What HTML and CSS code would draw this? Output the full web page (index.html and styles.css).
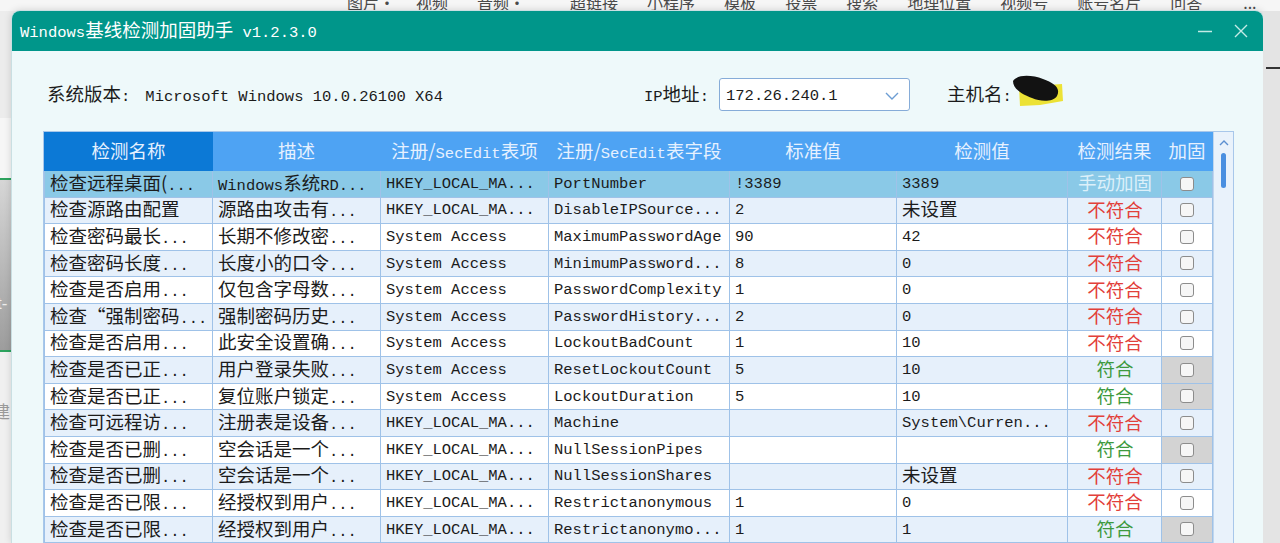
FILE: index.html
```html
<!DOCTYPE html>
<html lang="zh-CN">
<head>
  <meta charset="UTF-8" />
  <title>Windows基线检测加固助手 v1.2.3.0</title>
  <meta name="viewport" content="width=device-width, initial-scale=1" />
  <link rel="stylesheet" href="styles.css">
</head>
<body>
  <!-- editor toolbar behind the window, mostly hidden -->
  <div class="toolbar">
    <span class="drop">图片<b>·</b></span><span>视频</span><span class="drop">音频<b>·</b></span><span class="gap">超链接</span><span>小程序</span><span>模板</span><span>投票</span><span>搜索</span><span>地理位置</span><span>视频号</span><span>账号名片</span><span>问答</span><span class="more">...</span>
  </div>

  <div class="stage">
    <aside class="page-left">
      <div class="pl-top"></div>
      <div class="pl-light"></div>
      <div class="pl-banner"><span>t-</span></div>
      <div class="pl-rest"><span>建</span></div>
    </aside>

    <div class="window">
      <div class="titlebar">
        <div class="title">Windows<span class="zh">基线检测加固助手</span> v1.2.3.0</div>
        <div class="win-ctrl">
          <svg width="14" height="14" viewBox="0 0 14 14"><path d="M0 7.5 H14" stroke="#c4ebe6" stroke-width="1.6"/></svg>
          <svg width="14" height="14" viewBox="0 0 14 14"><path d="M1 1 L13 13 M13 1 L1 13" stroke="#c4ebe6" stroke-width="1.4"/></svg>
        </div>
      </div>

      <div class="content">
        <div class="info-row">
          <div class="sys"><span class="zh">系统版本</span>:<span class="val">Microsoft Windows 10.0.26100 X64</span></div>
          <div class="ip-label">IP<span class="zh">地址</span>:</div>
          <div class="ip-select">
            <span>172.26.240.1</span>
            <svg width="14" height="8" viewBox="0 0 14 8"><path d="M1 1 L7 7 L13 1" fill="none" stroke="#6c9dd3" stroke-width="1.4"/></svg>
          </div>
          <div class="host-label"><span class="zh">主机名</span>:</div>
          <svg class="scribble" width="54" height="34" viewBox="0 0 54 34">
            <path d="M9 13 L52 10 L53 27 L30 31 L10 32 Z" fill="#ece235"/>
            <path d="M3 7 C8 0 22 1 33 5 C44 9 51 14 47 22 C43 28 31 28 22 24 C14 21 3 16 3 7 Z" fill="#121212"/>
          </svg>
        </div>

        <div class="grid">
          <table>
            <colgroup>
              <col style="width:168px"><col style="width:168px"><col style="width:168px"><col style="width:181px">
              <col style="width:167px"><col style="width:171px"><col style="width:94px"><col style="width:51px">
            </colgroup>
            <thead>
              <tr>
                <th class="first"><span class="zh">检测名称</span></th>
                <th><span class="zh">描述</span></th>
                <th><span class="zh">注册/</span>SecEdit<span class="zh">表项</span></th>
                <th><span class="zh">注册/</span>SecEdit<span class="zh">表字段</span></th>
                <th><span class="zh">标准值</span></th>
                <th><span class="zh">检测值</span></th>
                <th><span class="zh">检测结果</span></th>
                <th><span class="zh">加固</span></th>
              </tr>
            </thead>
            <tbody>
              <tr class="selected">
                <td><span class="zh">检查远程桌面(</span>...</td>
                <td>Windows<span class="zh">系统</span>RD...</td>
                <td>HKEY_LOCAL_MA...</td>
                <td>PortNumber</td>
                <td>!3389</td>
                <td>3389</td>
                <td class="res manual">手动加固</td>
                <td class="chk"><span class="cb"></span></td>
              </tr>
              <tr>
                <td><span class="zh">检查源路由配置</span></td>
                <td><span class="zh">源路由攻击有</span>...</td>
                <td>HKEY_LOCAL_MA...</td>
                <td>DisableIPSource...</td>
                <td>2</td>
                <td><span class="zh">未设置</span></td>
                <td class="res bad">不符合</td>
                <td class="chk"><span class="cb"></span></td>
              </tr>
              <tr>
                <td><span class="zh">检查密码最长</span>...</td>
                <td><span class="zh">长期不修改密</span>...</td>
                <td>System Access</td>
                <td>MaximumPasswordAge</td>
                <td>90</td>
                <td>42</td>
                <td class="res bad">不符合</td>
                <td class="chk"><span class="cb"></span></td>
              </tr>
              <tr>
                <td><span class="zh">检查密码长度</span>...</td>
                <td><span class="zh">长度小的口令</span>...</td>
                <td>System Access</td>
                <td>MinimumPassword...</td>
                <td>8</td>
                <td>0</td>
                <td class="res bad">不符合</td>
                <td class="chk"><span class="cb"></span></td>
              </tr>
              <tr>
                <td><span class="zh">检查是否启用</span>...</td>
                <td><span class="zh">仅包含字母数</span>...</td>
                <td>System Access</td>
                <td>PasswordComplexity</td>
                <td>1</td>
                <td>0</td>
                <td class="res bad">不符合</td>
                <td class="chk"><span class="cb"></span></td>
              </tr>
              <tr>
                <td><span class="zh">检查“强制密码</span>...</td>
                <td><span class="zh">强制密码历史</span>...</td>
                <td>System Access</td>
                <td>PasswordHistory...</td>
                <td>2</td>
                <td>0</td>
                <td class="res bad">不符合</td>
                <td class="chk"><span class="cb"></span></td>
              </tr>
              <tr>
                <td><span class="zh">检查是否启用</span>...</td>
                <td><span class="zh">此安全设置确</span>...</td>
                <td>System Access</td>
                <td>LockoutBadCount</td>
                <td>1</td>
                <td>10</td>
                <td class="res bad">不符合</td>
                <td class="chk"><span class="cb"></span></td>
              </tr>
              <tr>
                <td><span class="zh">检查是否已正</span>...</td>
                <td><span class="zh">用户登录失败</span>...</td>
                <td>System Access</td>
                <td>ResetLockoutCount</td>
                <td>5</td>
                <td>10</td>
                <td class="res ok">符合</td>
                <td class="chk off"><span class="cb"></span></td>
              </tr>
              <tr>
                <td><span class="zh">检查是否已正</span>...</td>
                <td><span class="zh">复位账户锁定</span>...</td>
                <td>System Access</td>
                <td>LockoutDuration</td>
                <td>5</td>
                <td>10</td>
                <td class="res ok">符合</td>
                <td class="chk off"><span class="cb"></span></td>
              </tr>
              <tr>
                <td><span class="zh">检查可远程访</span>...</td>
                <td><span class="zh">注册表是设备</span>...</td>
                <td>HKEY_LOCAL_MA...</td>
                <td>Machine</td>
                <td></td>
                <td>System\Curren...</td>
                <td class="res bad">不符合</td>
                <td class="chk"><span class="cb"></span></td>
              </tr>
              <tr>
                <td><span class="zh">检查是否已删</span>...</td>
                <td><span class="zh">空会话是一个</span>...</td>
                <td>HKEY_LOCAL_MA...</td>
                <td>NullSessionPipes</td>
                <td></td>
                <td></td>
                <td class="res ok">符合</td>
                <td class="chk off"><span class="cb"></span></td>
              </tr>
              <tr>
                <td><span class="zh">检查是否已删</span>...</td>
                <td><span class="zh">空会话是一个</span>...</td>
                <td>HKEY_LOCAL_MA...</td>
                <td>NullSessionShares</td>
                <td></td>
                <td><span class="zh">未设置</span></td>
                <td class="res bad">不符合</td>
                <td class="chk"><span class="cb"></span></td>
              </tr>
              <tr>
                <td><span class="zh">检查是否已限</span>...</td>
                <td><span class="zh">经授权到用户</span>...</td>
                <td>HKEY_LOCAL_MA...</td>
                <td>Restrictanonymous</td>
                <td>1</td>
                <td>0</td>
                <td class="res bad">不符合</td>
                <td class="chk"><span class="cb"></span></td>
              </tr>
              <tr>
                <td><span class="zh">检查是否已限</span>...</td>
                <td><span class="zh">经授权到用户</span>...</td>
                <td>HKEY_LOCAL_MA...</td>
                <td>Restrictanonymo...</td>
                <td>1</td>
                <td>1</td>
                <td class="res ok">符合</td>
                <td class="chk off"><span class="cb"></span></td>
              </tr>
            </tbody>
          </table>
          <div class="scrollbar">
            <svg width="10" height="6" viewBox="0 0 10 6"><path d="M1 5 L5 1 L9 5" fill="none" stroke="#5b8fd0" stroke-width="1.4"/></svg>
            <div class="thumb"></div>
          </div>
        </div>
      </div>
    </div>

    <aside class="page-right"><div class="mark"></div></aside>
  </div>
</body>
</html>
```

FILE: styles.css
```css
:root {
  --teal: #00968a;
  --win-bg: #eef9fa;
  --head: #4ea3f3;
  --head-dark: #0c79d6;
  --line: #9fc2e8;
  --row-alt: #e6f0fb;
  --row-sel: #8ac9e7;
  --text: #1b1b1b;
  --bad: #e2403a;
  --ok: #3e9a3e;
}

html, body {
  margin: 0;
  height: 543px;
  overflow: hidden;
}

body {
  background-color: #ededed;
  font-family: "Liberation Mono", "Noto Sans CJK SC", monospace;
  font-size: 15.5px;
  color: var(--text);
}

.zh {
  font-family: "Noto Sans CJK SC", sans-serif;
  font-size: 18.5px;
}

/* background page */
.toolbar {
  height: 11px;
  overflow: hidden;
  background-color: #f6f6f6;
  display: flex;
  gap: 29px;
  padding-left: 347px;
  font-family: "Noto Sans CJK SC", sans-serif;
  font-size: 16px;
  line-height: 16px;
  color: #4a4a4a;
}

.toolbar span {
  margin-top: -6px;
  white-space: nowrap;
}

.toolbar .drop b {
  font-weight: normal;
  margin-right: -8px;
}

.toolbar .gap {
  margin-left: 24px;
}

.toolbar .more {
  margin-left: 12px;
}

.stage {
  display: flex;
  height: 532px;
}

.page-left {
  width: 12px;
  flex: none;
  display: flex;
  flex-direction: column;
  overflow: hidden;
}

.pl-top {
  height: 107px;
  background-color: #ececec;
}

.pl-light {
  height: 60px;
  background-color: #f6f6f6;
}

.pl-banner {
  height: 174px;
  box-sizing: border-box;
  border-top: 2px solid #2da35e;
  border-bottom: 2px solid #2da35e;
  background: linear-gradient(#d6d6d6, #9d9d9d);
  display: flex;
  align-items: flex-end;
  padding-bottom: 36px;
}

.pl-banner span {
  color: #eeeeee;
  font-family: "Liberation Sans", sans-serif;
  font-size: 17px;
  margin-left: -3px;
}

.pl-rest {
  flex: 1;
  background-color: #f0f0f0;
  padding-top: 46px;
}

.pl-rest span {
  display: block;
  margin-left: -7px;
  color: #9a9a9a;
  font-family: "Noto Sans CJK SC", sans-serif;
  font-size: 17px;
}

.page-right {
  flex: 1;
  background-color: #e4e4e4;
  padding-top: 56px;
}

.mark {
  height: 2px;
  margin-left: 3px;
  background-color: #333;
}

/* window */
.window {
  width: 1251px;
  flex: none;
  background-color: var(--win-bg);
  border-radius: 8px 8px 0 0;
  box-shadow: 0 0 0 1px #c9dfe2, 0 0 8px rgba(0, 0, 0, 0.18);
  overflow: hidden;
  display: flex;
  flex-direction: column;
}

.titlebar {
  height: 40px;
  flex: none;
  background-color: var(--teal);
  color: #ffffff;
  display: flex;
  align-items: center;
  justify-content: space-between;
  padding: 0 15px 0 8px;
  line-height: 20px;
}

.win-ctrl {
  display: flex;
  gap: 22px;
  align-items: center;
}

.content {
  padding: 27px 0 0 31px;
  line-height: 20px;
}

.info-row {
  display: flex;
  align-items: center;
  height: 33px;
  padding-left: 4px;
}

.sys {
  width: 597px;
  white-space: nowrap;
}

.sys .val {
  margin-left: 15px;
}

.ip-label {
  width: 75px;
}

.ip-select {
  width: 191px;
  height: 33px;
  box-sizing: border-box;
  background-color: #ffffff;
  border: 1px solid #86acd8;
  border-radius: 3px;
  display: flex;
  align-items: center;
  justify-content: space-between;
  padding: 2px 10px 0 6px;
}

.host-label {
  margin-left: 37px;
}

.scribble {
  align-self: flex-start;
  margin: -4px 0 0 -2px;
}

/* results grid */
.grid {
  display: flex;
  width: 1189px;
  margin-top: 20px;
  border: 1px solid #a8c7ea;
  background-color: #e9f2fb;
}

table {
  width: 1168px;
  table-layout: fixed;
  border-collapse: collapse;
  background-color: #ffffff;
}

th {
  height: 37px;
  padding: 0;
  background-color: var(--head);
  border: 1px solid var(--head);
  color: #e6f1ff;
  font-weight: normal;
  text-align: center;
  white-space: nowrap;
}

th.first {
  background-color: var(--head-dark);
  border-color: var(--head-dark);
}

td {
  height: 25.6px;
  padding: 0 4px 0 5px;
  border: 1px solid var(--line);
  white-space: nowrap;
  overflow: hidden;
}

tbody tr:nth-child(even) td {
  background-color: var(--row-alt);
}

tbody tr.selected td {
  background-color: var(--row-sel);
}

td.res {
  height: 22.6px;
  padding-bottom: 3px;
  text-align: center;
  font-family: "Noto Sans CJK SC", sans-serif;
  font-size: 18.5px;
  line-height: 20px;
}

td.bad {
  color: var(--bad);
}

td.ok {
  color: var(--ok);
}

td.manual {
  color: #dcf0fa;
}

td.chk {
  text-align: center;
  padding: 0;
}

tbody tr td.chk.off {
  background-color: #d3d3d3;
}

.cb {
  display: inline-block;
  width: 12px;
  height: 12px;
  border: 1.5px solid #8c8c8c;
  border-radius: 3px;
  background-color: #f6f6f6;
  vertical-align: middle;
}

.scrollbar {
  flex: 1;
  border-left: 1px solid #c0d6ee;
  display: flex;
  flex-direction: column;
  align-items: center;
  padding-top: 8px;
}

.thumb {
  width: 5px;
  height: 35px;
  margin-top: 7px;
  border-radius: 3px;
  background-color: #4a8fe0;
}
```
